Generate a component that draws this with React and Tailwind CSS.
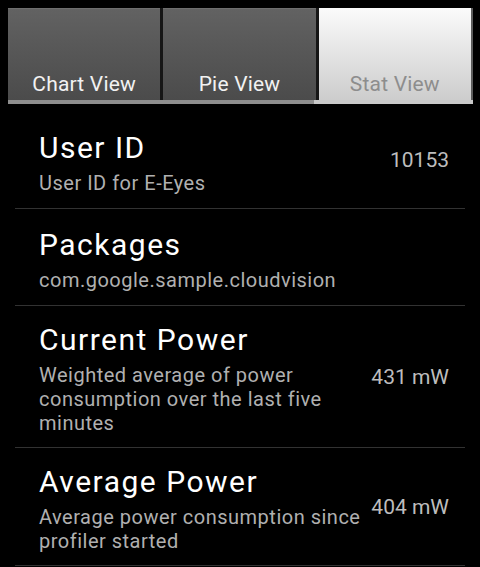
import React from "react";

const rows = [
  { title: "User ID", sub: "User ID for E-Eyes", value: "10153" },
  { title: "Packages", sub: "com.google.sample.cloudvision", value: "" },
  {
    title: "Current Power",
    sub: "Weighted average of power consumption over the last five minutes",
    value: "431 mW",
  },
  {
    title: "Average Power",
    sub: "Average power consumption since profiler started",
    value: "404 mW",
  },
];

export default function App() {
  return (
    <div
      className="w-[480px] h-[567px] bg-black overflow-hidden"
      style={{ fontFamily: "Roboto, 'Noto Sans', sans-serif" }}
    >
      <div className="pt-[8px] pl-[8px] pr-[7px]">
        <div className="flex gap-[3px] bg-[#161616]">
          <div className="flex-1 h-[92px] flex items-end justify-center pb-[4px] bg-gradient-to-b from-[#626262] to-[#4b4b4b] border-t border-[#6e6e6e]">
            <span className="text-[21px] leading-[24px] text-[#f2f2f2] tracking-[0.2px]">Chart View</span>
          </div>
          <div className="flex-1 h-[92px] flex items-end justify-center pb-[4px] bg-gradient-to-b from-[#626262] to-[#4b4b4b] border-t border-[#6e6e6e]">
            <span className="text-[21px] leading-[24px] text-[#f2f2f2] tracking-[0.2px]">Pie View</span>
          </div>
          <div className="flex-1 h-[92px] flex items-end justify-center pb-[4px] bg-gradient-to-b from-[#fbfbfb] to-[#cdcdcd] border-r-2 border-[#5c5c5c]">
            <span className="text-[21px] leading-[24px] text-[#8d8d8d] tracking-[0.2px]">Stat View</span>
          </div>
        </div>
        <div className="flex h-[4px]">
          <div className="w-[306px] bg-[#8e8e8e]" />
          <div className="flex-1 bg-[#c9c9c9]" />
        </div>
      </div>
      <div className="pt-[8px]">
        {rows.map((r) => (
          <div key={r.title} className="mx-[15px] border-b border-[#323232]">
            <div className="min-h-[96px] flex items-center pl-[24px] pr-[16px]">
              <div className="flex-1 pt-[16px] pb-[12px]">
                <div className="text-[30px] leading-[36px] text-white tracking-[1.5px]">{r.title}</div>
                <div className="mt-[5px] text-[20px] leading-[24px] text-[#b0b0b0] tracking-[0.5px]">{r.sub}</div>
              </div>
              {r.value ? (
                <div className="shrink-0 ml-[8px] text-[21px] leading-[24px] text-[#bdbdbd]">
                  {r.value}
                </div>
              ) : null}
            </div>
          </div>
        ))}
      </div>
    </div>
  );
}
